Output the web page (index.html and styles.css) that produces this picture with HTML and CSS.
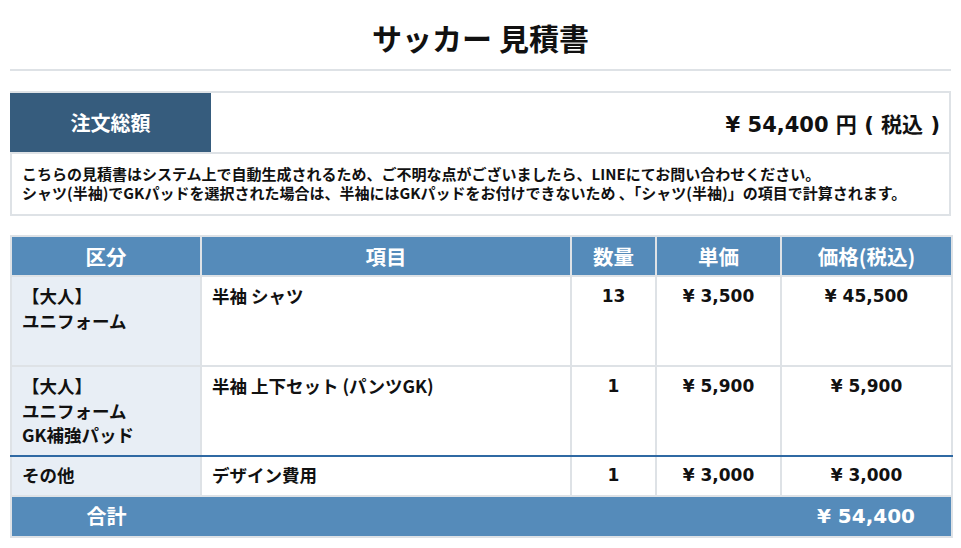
FILE: index.html
```html
<!DOCTYPE html>
<html lang="ja">
<head>
<meta charset="utf-8">
<title>サッカー 見積書</title>
<link rel="stylesheet" href="styles.css">
</head>
<body>
<div class="page">
  <h1 class="title">サッカー 見積書</h1>
  <hr class="rule">
  <div class="summary">
    <div class="sum-row">
      <div class="sum-label">注文総額</div>
      <div class="sum-amount">¥ 54,400 円 ( 税込 )</div>
    </div>
    <div class="note">
      <p>こちらの見積書はシステム上で自動生成されるため、ご不明な点がございましたら、LINEにてお問い合わせください。</p>
      <p>シャツ(半袖)でGKパッドを選択された場合は、半袖にはGKパッドをお付けできないため 、「シャツ(半袖)」の項目で計算されます。</p>
    </div>
  </div>
  <table class="quote">
    <colgroup>
      <col class="c1"><col class="c2"><col class="c3"><col class="c4"><col class="c5">
    </colgroup>
    <thead>
      <tr>
        <th>区分</th><th>項目</th><th>数量</th><th>単価</th><th>価格(税込)</th>
      </tr>
    </thead>
    <tbody>
      <tr class="tall">
        <td class="cat">【大人】<br>ユニフォーム</td>
        <td>半袖 シャツ</td>
        <td class="num">13</td>
        <td class="num">¥ 3,500</td>
        <td class="num">¥ 45,500</td>
      </tr>
      <tr class="tall last">
        <td class="cat">【大人】<br>ユニフォーム<br>GK補強パッド</td>
        <td>半袖 上下セット (パンツGK)</td>
        <td class="num">1</td>
        <td class="num">¥ 5,900</td>
        <td class="num">¥ 5,900</td>
      </tr>
      <tr class="other">
        <td class="cat">その他</td>
        <td>デザイン費用</td>
        <td class="num">1</td>
        <td class="num">¥ 3,000</td>
        <td class="num">¥ 3,000</td>
      </tr>
    </tbody>
    <tfoot>
      <tr>
        <td class="foot-label">合計</td>
        <td class="foot-gap" colspan="3"></td>
        <td class="foot-total">¥ 54,400</td>
      </tr>
    </tfoot>
  </table>
</div>
</body>
</html>
```
FILE: styles.css
```css
* { box-sizing: border-box; }
html, body { margin: 0; padding: 0; background: #ffffff; }
body {
  font-family: "Noto Sans CJK JP", "Noto Sans", "Liberation Sans", sans-serif;
  color: #111111;
}
.page { padding: 0 10px; }
.title {
  margin: 17px 0 0;
  font-size: 30px;
  line-height: 40px;
  font-weight: 700;
  text-align: center;
  color: #111;
}
.rule {
  margin: 12px 0 0;
  border: 0;
  height: 2px;
  background: #dee2e6;
}
.summary {
  margin-top: 20px;
  border: 2px solid #dee2e6;
  border-left: 0;
}
.sum-row {
  display: flex;
  height: 59px;
}
.sum-label {
  width: 201px;
  background: #365c7d;
  color: #fff;
  font-size: 20px;
  font-weight: 700;
  display: flex;
  align-items: center;
  justify-content: center;
}
.sum-amount {
  flex: 1;
  display: flex;
  align-items: center;
  justify-content: flex-end;
  padding-right: 9px;
  font-family: "DejaVu Sans", "Noto Sans CJK JP", sans-serif;
  font-size: 21px;
  font-weight: 700;
}
.note {
  border-top: 2px solid #dee2e6;
  border-left: 2px solid #dee2e6;
  padding: 10px 10px 12px;
  font-size: 15px;
  font-weight: 700;
  line-height: 19px;
}
.note p { margin: 0; white-space: nowrap; }
.quote {
  margin-top: 19px;
  width: 100%;
  table-layout: fixed;
  border-collapse: collapse;
  border: 2px solid #dee2e6;
}
.c1 { width: 190px; }
.c2 { width: 370px; }
.c3 { width: 85px; }
.c4 { width: 125px; }
.c5 { width: 171px; }
.quote th, .quote td {
  border: 2px solid #dee2e6;
}
.quote th {
  background: #558bba;
  color: #fff;
  font-size: 20.5px;
  font-weight: 700;
  height: 40px;
  padding: 0;
  text-align: center;
  vertical-align: middle;
}
.quote td {
  font-size: 17.5px;
  font-weight: 700;
  line-height: 24.5px;
  padding: 7px 10px;
  vertical-align: top;
  text-align: left;
}
.quote td.cat { background: #e8eef5; }
.quote td.num {
  text-align: center;
  font-family: "DejaVu Sans", "Noto Sans CJK JP", sans-serif;
  font-size: 17px;
}
.quote tr.tall td { height: 90px; }
.quote tr.last td { border-bottom: 2px solid #2f69a3; }
.quote tr.other td { border-top: 2px solid #2f69a3; height: 39px; padding-top: 6px; }
.quote tfoot td {
  background: #558bba;
  color: #fff;
  font-size: 20px;
  font-weight: 700;
  height: 41px;
  padding: 0;
  text-align: center;
  vertical-align: middle;
}
.quote tfoot td.foot-total {
  font-family: "DejaVu Sans", "Noto Sans CJK JP", sans-serif;
}
.quote tfoot td.foot-label { border-right: 0; }
.quote tfoot td.foot-gap { border-left: 0; border-right: 0; }
.quote tfoot td.foot-total { border-left: 0; }
```
